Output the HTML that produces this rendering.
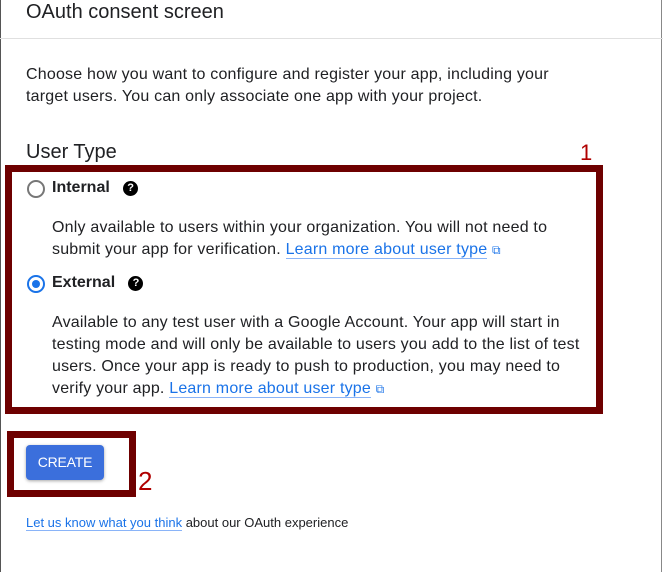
<!DOCTYPE html>
<html><head><style>
body{margin:0;width:663px;height:572px;background:#fff;position:relative;overflow:hidden;font-family:"Liberation Sans",Arial,sans-serif;color:#202124}
.a{position:absolute;white-space:nowrap}
.t{font-size:16px;letter-spacing:0.2px;line-height:22px}
a{color:#1a73e8;text-decoration:none;border-bottom:1px solid #8ab4f8}
.box{position:absolute;border:7px solid #6e0000;box-sizing:border-box}
.q{display:inline-block;width:15px;height:15px;border-radius:50%;background:#000;color:#fff;font-size:11px;font-weight:bold;text-align:center;line-height:15px;vertical-align:1px}
</style></head><body>
<div style="position:absolute;left:0;top:0;width:1px;height:572px;background:#555"></div>
<div style="position:absolute;left:661px;top:0;width:1px;height:572px;background:#888"></div>
<div style="position:absolute;left:0;top:38px;width:663px;height:1px;background:#e0e0e0"></div>
<div class="a" style="left:26px;top:0px;font-size:20px;line-height:24px">OAuth consent screen</div>
<div class="a t" style="left:26px;top:64px">Choose how you want to configure and register your app, including your<br>target users. You can only associate one app with your project.</div>
<div class="a" style="left:26px;top:141px;font-size:20px">User Type</div>
<div class="a" style="left:580px;top:140px;font-size:22px;color:#b00000">1</div>
<div class="box" style="left:5px;top:165px;width:598px;height:249px"></div>
<div style="position:absolute;left:27px;top:180px;width:14px;height:14px;border:2px solid #777;border-radius:50%"></div>
<div class="a t" style="left:52px;top:177px;font-weight:bold;letter-spacing:0">Internal &nbsp; <span class="q">?</span></div>
<div class="a t" style="left:52px;top:217px">Only available to users within your organization. You will not need to<br>submit your app for verification. <a>Learn more about user type</a> <span style="color:#1a73e8;font-size:12px">⧉</span></div>
<div style="position:absolute;left:27px;top:275px;width:14px;height:14px;border:2px solid #1a73e8;border-radius:50%"></div>
<div style="position:absolute;left:32px;top:280px;width:8px;height:8px;background:#1a73e8;border-radius:50%"></div>
<div class="a t" style="left:52px;top:272px;font-weight:bold;letter-spacing:0">External &nbsp; <span class="q">?</span></div>
<div class="a t" style="left:52px;top:312px">Available to any test user with a Google Account. Your app will start in<br>testing mode and will only be available to users you add to the list of test<br>users. Once your app is ready to push to production, you may need to<br>verify your app. <a>Learn more about user type</a> <span style="color:#1a73e8;font-size:12px">⧉</span></div>
<div class="box" style="left:7px;top:431px;width:129px;height:66px"></div>
<div style="position:absolute;left:26px;top:445px;width:78px;height:35px;background:#3b6fdc;border-radius:4px;box-shadow:0 1px 3px rgba(0,0,0,.35);color:#fff;font-size:14px;text-align:center;line-height:35px;letter-spacing:-0.2px">CREATE</div>
<div class="a" style="left:138px;top:466px;font-size:26px;color:#b00000">2</div>
<div class="a" style="left:26px;top:515px;font-size:13px"><a>Let us know what you think</a> about our OAuth experience</div>
</body></html>
